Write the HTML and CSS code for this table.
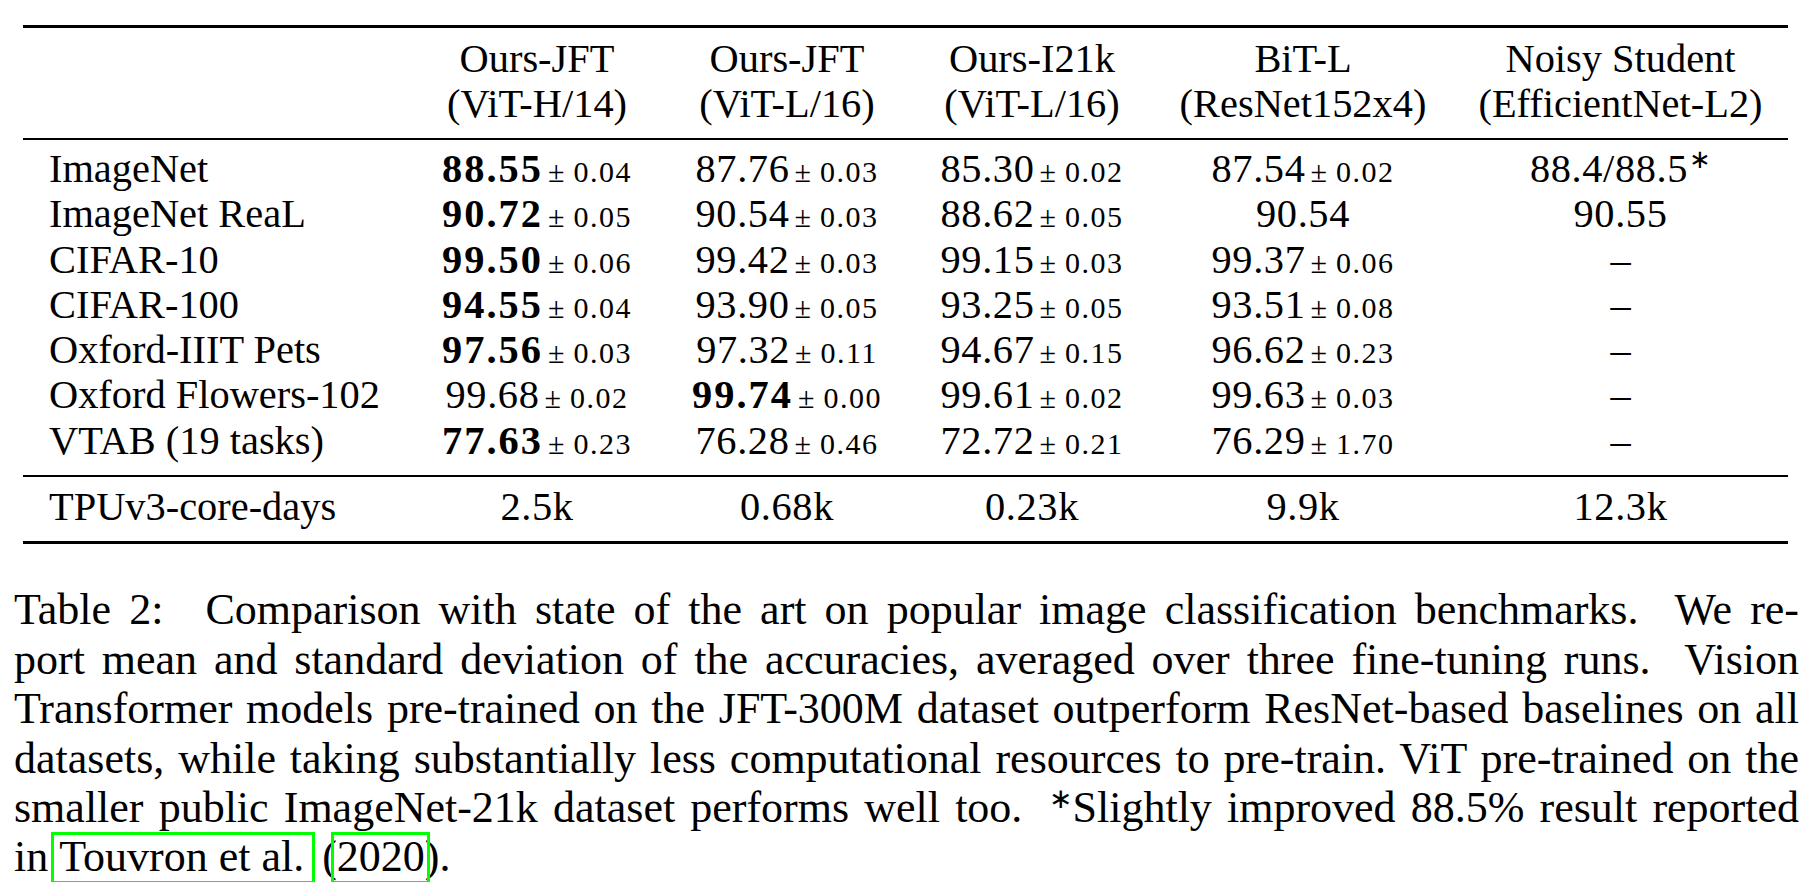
FILE: index.html
```html
<!DOCTYPE html>
<html>
<head>
<meta charset="utf-8">
<link rel="stylesheet" href="styles.css">
</head>
<body>
<div class="tbl">
  <div class="rule thick"></div>
  <div class="head">
    <div class="row hrow">
      <div class="c lab"></div>
      <div class="c"><div>Ours-JFT</div><div>(ViT-H/14)</div></div>
      <div class="c"><div>Ours-JFT</div><div>(ViT-L/16)</div></div>
      <div class="c"><div>Ours-I21k</div><div>(ViT-L/16)</div></div>
      <div class="c"><div>BiT-L</div><div>(ResNet152x4)</div></div>
      <div class="c"><div>Noisy Student</div><div>(EfficientNet-L2)</div></div>
    </div>
  </div>
  <div class="rule thin"></div>
  <div class="body">
    <div class="row">
      <div class="c lab">ImageNet</div>
      <div class="c"><span class="n b">88.55</span><span class="sd">±&#8201;0.04</span></div>
      <div class="c"><span class="n">87.76</span><span class="sd">±&#8201;0.03</span></div>
      <div class="c"><span class="n">85.30</span><span class="sd">±&#8201;0.02</span></div>
      <div class="c"><span class="n">87.54</span><span class="sd">±&#8201;0.02</span></div>
      <div class="c"><span class="n">88.4/88.5</span><sup class="ast">∗</sup></div>
    </div>
    <div class="row">
      <div class="c lab">ImageNet ReaL</div>
      <div class="c"><span class="n b">90.72</span><span class="sd">±&#8201;0.05</span></div>
      <div class="c"><span class="n">90.54</span><span class="sd">±&#8201;0.03</span></div>
      <div class="c"><span class="n">88.62</span><span class="sd">±&#8201;0.05</span></div>
      <div class="c"><span class="n">90.54</span></div>
      <div class="c"><span class="n">90.55</span></div>
    </div>
    <div class="row">
      <div class="c lab">CIFAR-10</div>
      <div class="c"><span class="n b">99.50</span><span class="sd">±&#8201;0.06</span></div>
      <div class="c"><span class="n">99.42</span><span class="sd">±&#8201;0.03</span></div>
      <div class="c"><span class="n">99.15</span><span class="sd">±&#8201;0.03</span></div>
      <div class="c"><span class="n">99.37</span><span class="sd">±&#8201;0.06</span></div>
      <div class="c">–</div>
    </div>
    <div class="row">
      <div class="c lab">CIFAR-100</div>
      <div class="c"><span class="n b">94.55</span><span class="sd">±&#8201;0.04</span></div>
      <div class="c"><span class="n">93.90</span><span class="sd">±&#8201;0.05</span></div>
      <div class="c"><span class="n">93.25</span><span class="sd">±&#8201;0.05</span></div>
      <div class="c"><span class="n">93.51</span><span class="sd">±&#8201;0.08</span></div>
      <div class="c">–</div>
    </div>
    <div class="row">
      <div class="c lab">Oxford-IIIT Pets</div>
      <div class="c"><span class="n b">97.56</span><span class="sd">±&#8201;0.03</span></div>
      <div class="c"><span class="n">97.32</span><span class="sd">±&#8201;0.11</span></div>
      <div class="c"><span class="n">94.67</span><span class="sd">±&#8201;0.15</span></div>
      <div class="c"><span class="n">96.62</span><span class="sd">±&#8201;0.23</span></div>
      <div class="c">–</div>
    </div>
    <div class="row">
      <div class="c lab">Oxford Flowers-102</div>
      <div class="c"><span class="n">99.68</span><span class="sd">±&#8201;0.02</span></div>
      <div class="c"><span class="n b">99.74</span><span class="sd">±&#8201;0.00</span></div>
      <div class="c"><span class="n">99.61</span><span class="sd">±&#8201;0.02</span></div>
      <div class="c"><span class="n">99.63</span><span class="sd">±&#8201;0.03</span></div>
      <div class="c">–</div>
    </div>
    <div class="row">
      <div class="c lab">VTAB (19 tasks)</div>
      <div class="c"><span class="n b">77.63</span><span class="sd">±&#8201;0.23</span></div>
      <div class="c"><span class="n">76.28</span><span class="sd">±&#8201;0.46</span></div>
      <div class="c"><span class="n">72.72</span><span class="sd">±&#8201;0.21</span></div>
      <div class="c"><span class="n">76.29</span><span class="sd">±&#8201;1.70</span></div>
      <div class="c">–</div>
    </div>
  </div>
  <div class="rule thin"></div>
  <div class="foot">
    <div class="row">
      <div class="c lab">TPUv3-core-days</div>
      <div class="c"><span class="n">2.5k</span></div>
      <div class="c"><span class="n">0.68k</span></div>
      <div class="c"><span class="n">0.23k</span></div>
      <div class="c"><span class="n">9.9k</span></div>
      <div class="c"><span class="n">12.3k</span></div>
    </div>
  </div>
  <div class="rule thick"></div>
</div>

<div class="caption">
  <div class="line"><span class="tlabel">Table 2:</span> Comparison with state of the art on popular image classification benchmarks. &nbsp;We re-</div>
  <div class="line">port mean and standard deviation of the accuracies, averaged over three fine-tuning runs. &nbsp;Vision</div>
  <div class="line">Transformer models pre-trained on the JFT-300M dataset outperform ResNet-based baselines on all</div>
  <div class="line">datasets, while taking substantially less computational resources to pre-train. ViT pre-trained on the</div>
  <div class="line">smaller public ImageNet-21k dataset performs well too. <sup class="cast">∗</sup>Slightly improved 88.5% result reported</div>
  <div class="line last">in <span class="cite">Touvron et al.</span> (<span class="cite yr">2020</span>).</div>
</div>
</body>
</html>
```

FILE: styles.css
```css
html, body {
  margin: 0;
  padding: 0;
  background: #ffffff;
}

body {
  color: #000000;
  font-family: "Liberation Serif", "Times New Roman", serif;
}

.tbl {
  margin-top: 25px;
  margin-left: 23px;
  width: 1765px;
  font-size: 40.4px;
}

.rule {
  background: #000000;
}

.rule.thick {
  height: 3px;
}

.rule.thin {
  height: 2px;
}

.head {
  padding-top: 8px;
  padding-bottom: 12px;
}

.body {
  padding-top: 6px;
  padding-bottom: 12px;
}

.foot {
  padding-top: 7px;
  padding-bottom: 12px;
}

.row {
  display: grid;
  grid-template-columns: 388px 252px 248px 242px 300px 335px;
  line-height: 45.3px;
  white-space: nowrap;
}

.hrow {
  line-height: 45px;
}

.c {
  text-align: center;
}

.c.lab {
  text-align: left;
  padding-left: 26px;
}

.n {
  letter-spacing: 0.6px;
}

.n.b {
  font-weight: bold;
  letter-spacing: 2px;
}

.sd {
  font-size: 30px;
  line-height: 1;
  margin-left: 5px;
  letter-spacing: 1.5px;
}

.ast {
  font-size: 26px;
  line-height: 1;
  vertical-align: 14px;
  margin-left: 1px;
}

.caption {
  margin-top: 41px;
  margin-left: 14px;
  width: 1785px;
  font-size: 44px;
  line-height: 49.4px;
}

.line {
  text-align: justify;
  text-align-last: justify;
}

.line.last {
  text-align: left;
  text-align-last: left;
}

.tlabel {
  margin-right: 24px;
}

.cast {
  font-size: 28px;
  line-height: 1;
  vertical-align: 14px;
  margin-left: 12px;
}

.cite {
  outline: 3.5px solid #00ff00;
  outline-offset: -3.5px;
  padding: 0 11px 3px 8px;
  margin: 0 -4px 0 -8px;
}

.cite.yr {
  padding: 0 5px 3px 6px;
  margin: 0 -5px 0 -6px;
}
```
